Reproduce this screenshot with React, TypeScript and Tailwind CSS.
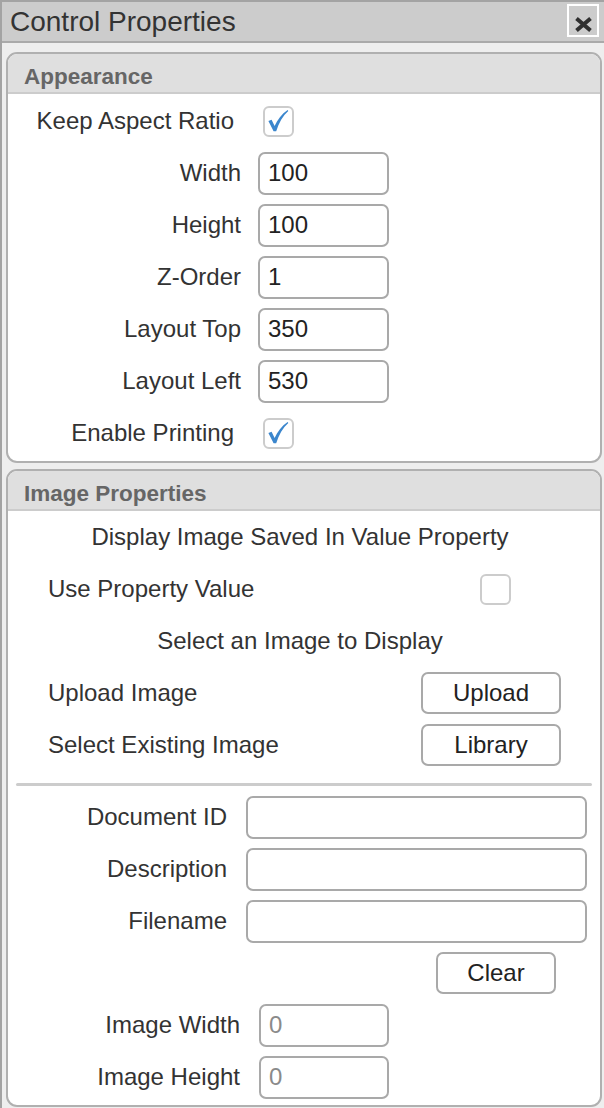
import React from "react";

const FONT = { fontFamily: '"Liberation Sans", Arial, Helvetica, sans-serif' };

function CheckBox({ checked }: { checked?: boolean }) {
  return (
    <div className="flex h-[31px] w-[31px] items-center justify-center rounded-[6px] border-2 border-[#cccccc] bg-white">
      {checked && (
        <svg width="27" height="27" viewBox="0 0 27 27">
          <path
            d="M3.4 13 L6.6 11.8 L9.6 18 C12.4 11.6 16.6 6.2 22.6 2 L23.3 3.1 C17.8 8.2 13.8 14.8 11.2 23.2 L8.6 23.2 Z"
            fill="#3b86cd"
          />
        </svg>
      )}
    </div>
  );
}

function TextBox({ value, placeholder, className }: { value?: string; placeholder?: string; className: string }) {
  return (
    <div
      className={`flex h-[43px] items-center rounded-[7px] border-2 border-[#a9a9a9] bg-white px-[8px] ${className}`}
    >
      {value ? (
        <span className="text-[#222222]">{value}</span>
      ) : (
        <span className="text-[#8a8a8a]">{placeholder}</span>
      )}
    </div>
  );
}

function Button({ label, className }: { label: string; className: string }) {
  return (
    <div
      className={`flex h-[42px] items-center justify-center rounded-[7px] border-2 border-[#a9a9a9] bg-white text-[#222222] ${className}`}
    >
      {label}
    </div>
  );
}

function PanelHeader({ title }: { title: string }) {
  return (
    <div className="flex h-[40px] items-center rounded-t-[9px] border-b-2 border-[#cccccc] bg-[#dfdfdf] pl-[16px] pt-[7px] text-[22.5px] font-bold text-[#666666]">
      {title}
    </div>
  );
}

// label column right-aligned, value column left
function FieldRow({ label, children, checkbox }: { label: string; children: React.ReactNode; checkbox?: boolean }) {
  return (
    <div className="flex h-[52px] items-center">
      <div className={`w-[233px] shrink-0 whitespace-nowrap text-right ${checkbox ? "pr-[7px]" : ""}`}>{label}</div>
      <div className={`${checkbox ? "ml-[22px]" : "ml-[17px]"}`}>{children}</div>
    </div>
  );
}

export default function App() {
  return (
    <div
      style={FONT}
      className="flex h-[1108px] w-[604px] flex-col overflow-hidden border-l-2 border-t-2 border-[#a3a3a3] bg-[#eeeeee] text-[24px] text-[#333333]"
    >
      {/* Title bar */}
      <div className="flex h-[41px] shrink-0 items-center justify-between border-b-2 border-[#aaaaaa] bg-[#cccccc] pl-[8px] pr-[5px]">
        <span className="pt-[1px] text-[28px] text-[#333333]">Control Properties</span>
        <div className="mt-[-2px] flex h-[33px] w-[32px] items-end justify-center border-2 border-white pb-[2px]">
          <svg width="19" height="17" viewBox="0 0 19 17">
            <path d="M2.5 2.5 L16.5 14.5 M16.5 2.5 L2.5 14.5" stroke="#2f2f2f" strokeWidth="4" strokeLinecap="butt" />
          </svg>
        </div>
      </div>

      <div className="flex flex-col pl-[4px] pr-[2px] pt-[9px]">
        {/* Appearance */}
        <div className="rounded-[11px] border-2 border-[#b0b0b0] bg-white">
          <PanelHeader title="Appearance" />
          <div className="pb-[2px] pt-[1px]">
            <FieldRow label="Keep Aspect Ratio" checkbox>
              <CheckBox checked />
            </FieldRow>
            <FieldRow label="Width">
              <TextBox value="100" className="w-[131px]" />
            </FieldRow>
            <FieldRow label="Height">
              <TextBox value="100" className="w-[131px]" />
            </FieldRow>
            <FieldRow label="Z-Order">
              <TextBox value="1" className="w-[131px]" />
            </FieldRow>
            <FieldRow label="Layout Top">
              <TextBox value="350" className="w-[131px]" />
            </FieldRow>
            <FieldRow label="Layout Left">
              <TextBox value="530" className="w-[131px]" />
            </FieldRow>
            <FieldRow label="Enable Printing" checkbox>
              <CheckBox checked />
            </FieldRow>
          </div>
        </div>

        {/* Image Properties */}
        <div className="mt-[6px] rounded-[11px] border-2 border-[#b0b0b0] bg-white">
          <PanelHeader title="Image Properties" />
          <div className="pb-[2px]">
            <div className="flex h-[52px] items-center justify-center pr-[8px]">
              Display Image Saved In Value Property
            </div>
            <div className="flex h-[52px] items-center">
              <div className="flex-1 pl-[40px]">Use Property Value</div>
              <div className="mr-[39px] w-[140px] pl-[59px]">
                <CheckBox />
              </div>
            </div>
            <div className="flex h-[52px] items-center justify-center pr-[8px]">Select an Image to Display</div>
            <div className="flex h-[52px] items-center">
              <div className="flex-1 pl-[40px]">Upload Image</div>
              <Button label="Upload" className="mr-[39px] w-[140px]" />
            </div>
            <div className="flex h-[52px] items-center">
              <div className="flex-1 pl-[40px]">Select Existing Image</div>
              <Button label="Library" className="mr-[39px] w-[140px]" />
            </div>

            <div className="h-[20px] px-[8px] pt-[12px]">
              <div className="h-[3px] rounded-full bg-[#cccccc]" />
            </div>

            {["Document ID", "Description", "Filename"].map((l) => (
              <div key={l} className="flex h-[52px] items-center">
                <div className="w-[219px] shrink-0 text-right">{l}</div>
                <TextBox className="ml-[19px] w-[341px]" />
              </div>
            ))}
            <div className="flex h-[52px] items-center">
              <Button label="Clear" className="ml-[428px] w-[120px]" />
            </div>
            {["Image Width", "Image Height"].map((l) => (
              <div key={l} className="flex h-[52px] items-center">
                <div className="w-[232px] shrink-0 text-right">{l}</div>
                <TextBox placeholder="0" className="ml-[19px] w-[130px]" />
              </div>
            ))}
          </div>
        </div>
      </div>
    </div>
  );
}
